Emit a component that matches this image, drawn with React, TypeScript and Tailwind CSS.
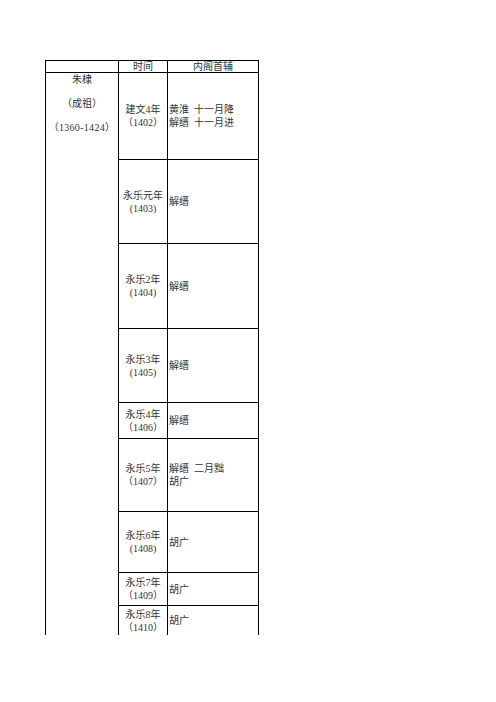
const rows = [
  { time: '建文4年', year: '（1402）', text: ['黄淮  十一月降', '解缙  十一月进'] },
  { time: '永乐元年', year: '(1403)', text: ['解缙'] },
  { time: '永乐2年', year: '(1404)', text: ['解缙'] },
  { time: '永乐3年', year: '(1405)', text: ['解缙'] },
  { time: '永乐4年', year: '（1406）', text: ['解缙'] },
  { time: '永乐5年', year: '（1407）', text: ['解缙  二月黜', '胡广'] },
  { time: '永乐6年', year: '(1408)', text: ['胡广'] },
  { time: '永乐7年', year: '（1409）', text: ['胡广'] },
  { time: '永乐8年', year: '（1410）', text: ['胡广'] },
];

export default function App() {
  return (
    <div
      className="min-h-[702px] w-[496px] bg-white pl-[45px] pt-[60px] text-[10px] leading-[13px] text-[#333]"
      style={{ fontFamily: '"Liberation Serif", "Noto Sans CJK SC", serif' }}
    >
      <div className="grid w-[214px] grid-cols-[73px_49px_91px] grid-rows-[12px_87px_84px_85px_74px_36px_73px_61px_33px_29px] border-l border-t border-black">
        <div className="border-b border-r border-black" />
        <div className="flex items-center justify-center border-b border-r border-black leading-[11px]">时间</div>
        <div className="flex items-center justify-center border-b border-r border-black leading-[11px]">内阁首辅</div>

        <div className="row-span-9 flex flex-col items-center border-r border-black pt-[1px] leading-[12px]">
          <span>朱棣</span>
          <span className="mt-[12px]">（成祖）</span>
          <span className="mt-[12px] tracking-[0.3px]">（1360-1424）</span>
        </div>

        {rows.map((r, i) => {
          const last = i === rows.length - 1;
          return [
            <div
              key={'t' + i}
              className={`flex flex-col items-center justify-center border-r border-black ${last ? '' : 'border-b'}`}
            >
              <span>{r.time}</span>
              <span>{r.year}</span>
            </div>,
            <div
              key={'c' + i}
              className={`flex flex-col justify-center border-r border-black pl-[1px] whitespace-pre ${last ? '' : 'border-b'}`}
            >
              {r.text.map((t, j) => (
                <span key={j}>{t}</span>
              ))}
            </div>,
          ];
        })}
      </div>
    </div>
  );
}
